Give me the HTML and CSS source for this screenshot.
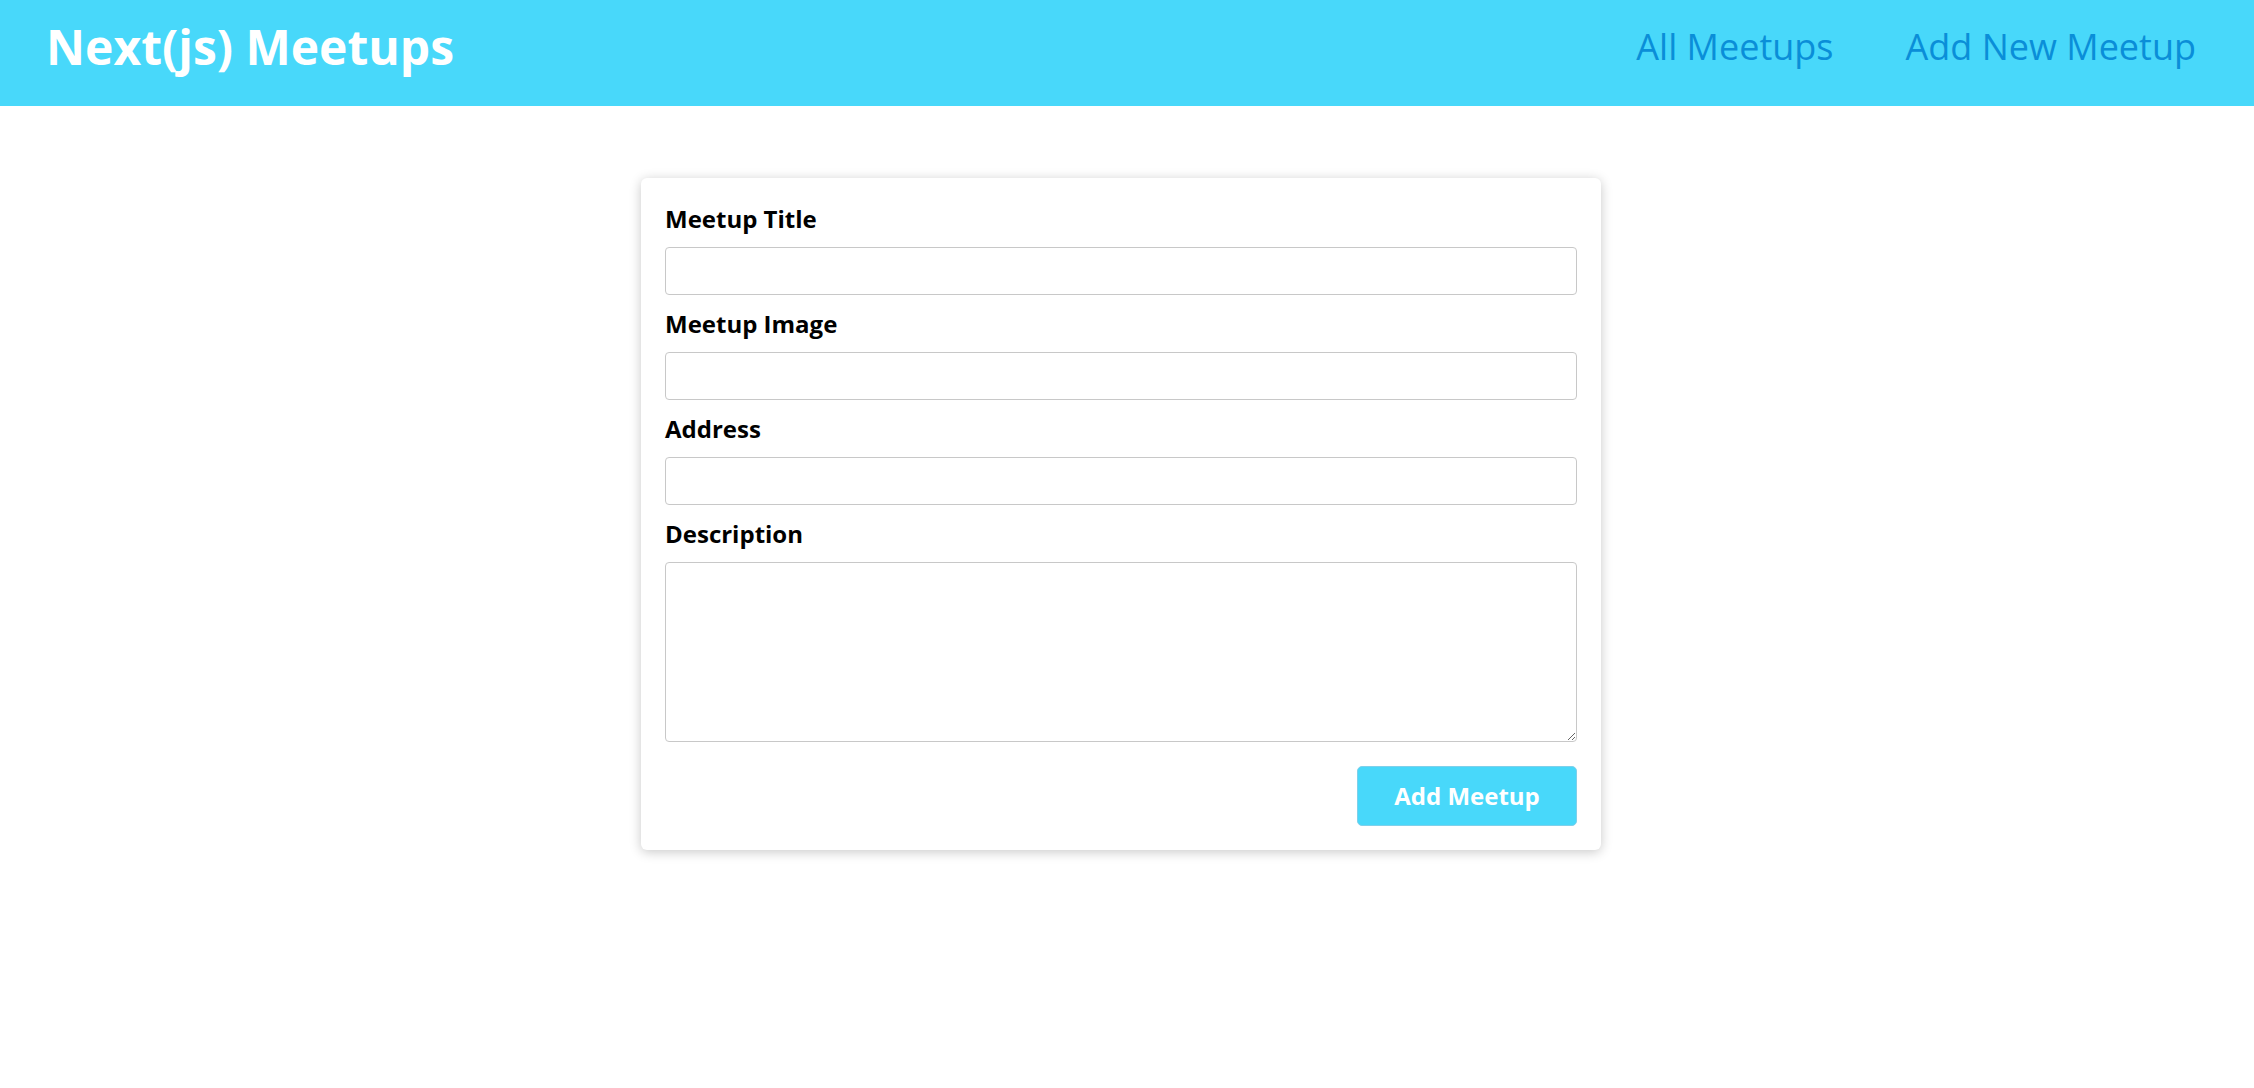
FILE: index.html
```
<!DOCTYPE html>
<html lang="en">
<head>
<meta charset="utf-8">
<title>Next(js) Meetups</title>
<link rel="stylesheet" href="styles.css">
</head>
<body>
<header class="header">
  <div class="logo">Next(js) Meetups</div>
  <nav class="nav">
    <ul class="nav-list">
      <li><a class="nav-link" href="#">All Meetups</a></li>
      <li><a class="nav-link" href="#">Add New Meetup</a></li>
    </ul>
  </nav>
</header>
<div class="page">
  <main class="main">
    <div class="card">
      <form class="form">
        <div class="control">
          <label class="label" for="title">Meetup Title</label>
          <input class="input" type="text" id="title">
        </div>
        <div class="control">
          <label class="label" for="image">Meetup Image</label>
          <input class="input" type="url" id="image">
        </div>
        <div class="control">
          <label class="label" for="address">Address</label>
          <input class="input" type="text" id="address">
        </div>
        <div class="control">
          <label class="label" for="description">Description</label>
          <textarea class="textarea" id="description"></textarea>
        </div>
        <div class="actions">
          <button class="button" type="button">Add Meetup</button>
        </div>
      </form>
    </div>
  </main>
</div>
</body>
</html>
```
FILE: styles.css
```
* { box-sizing: border-box; }
html, body { margin: 0; padding: 0; }
body {
  font-family: "Open Sans", "Noto Sans", sans-serif;
  background: #ffffff;
  color: #000;
}
.header {
  height: 106px;
  background: #48d8fa;
  display: flex;
  align-items: center;
  justify-content: space-between;
  padding: 0 58px 0 46px;
}
.logo {
  font-size: 48px;
  font-weight: 700;
  color: #ffffff;
  line-height: 1;
  margin-bottom: 13px;
}
.nav {
  margin-bottom: 12px;
}
.nav-list {
  list-style: none;
  margin: 0;
  padding: 0;
  display: flex;
  align-items: baseline;
  gap: 72px;
}
.nav-link {
  text-decoration: none;
  color: #0a8ed8;
  font-size: 36px;
  line-height: 1;
}
.page {
  padding-right: 12px;
}
.main {
  width: 960px;
  margin: 72px auto;
}
.card {
  background: #fff;
  border-radius: 6px;
  box-shadow: 0 2px 12px rgba(0, 0, 0, 0.22);
  padding: 24px;
}
.control {
  margin-bottom: 12px;
}
.label {
  display: block;
  font-size: 24px;
  font-weight: 700;
  line-height: 34px;
  margin-bottom: 11px;
}
.input, .textarea {
  display: block;
  width: 100%;
  font: inherit;
  font-size: 24px;
  line-height: 34px;
  padding: 6px;
  border: 1px solid #c8c8c8;
  border-radius: 4px;
  background: #fff;
}
.textarea {
  height: 180px;
}
.actions {
  margin-top: 24px;
  display: flex;
  justify-content: flex-end;
}
.button {
  font: inherit;
  font-size: 24px;
  font-weight: 700;
  line-height: 34px;
  color: #fff;
  background: #48d8fa;
  border: 1px solid #7fd0ea;
  border-radius: 5px;
  height: 60px;
  width: 220px;
  padding: 0;
  cursor: pointer;
}
```
